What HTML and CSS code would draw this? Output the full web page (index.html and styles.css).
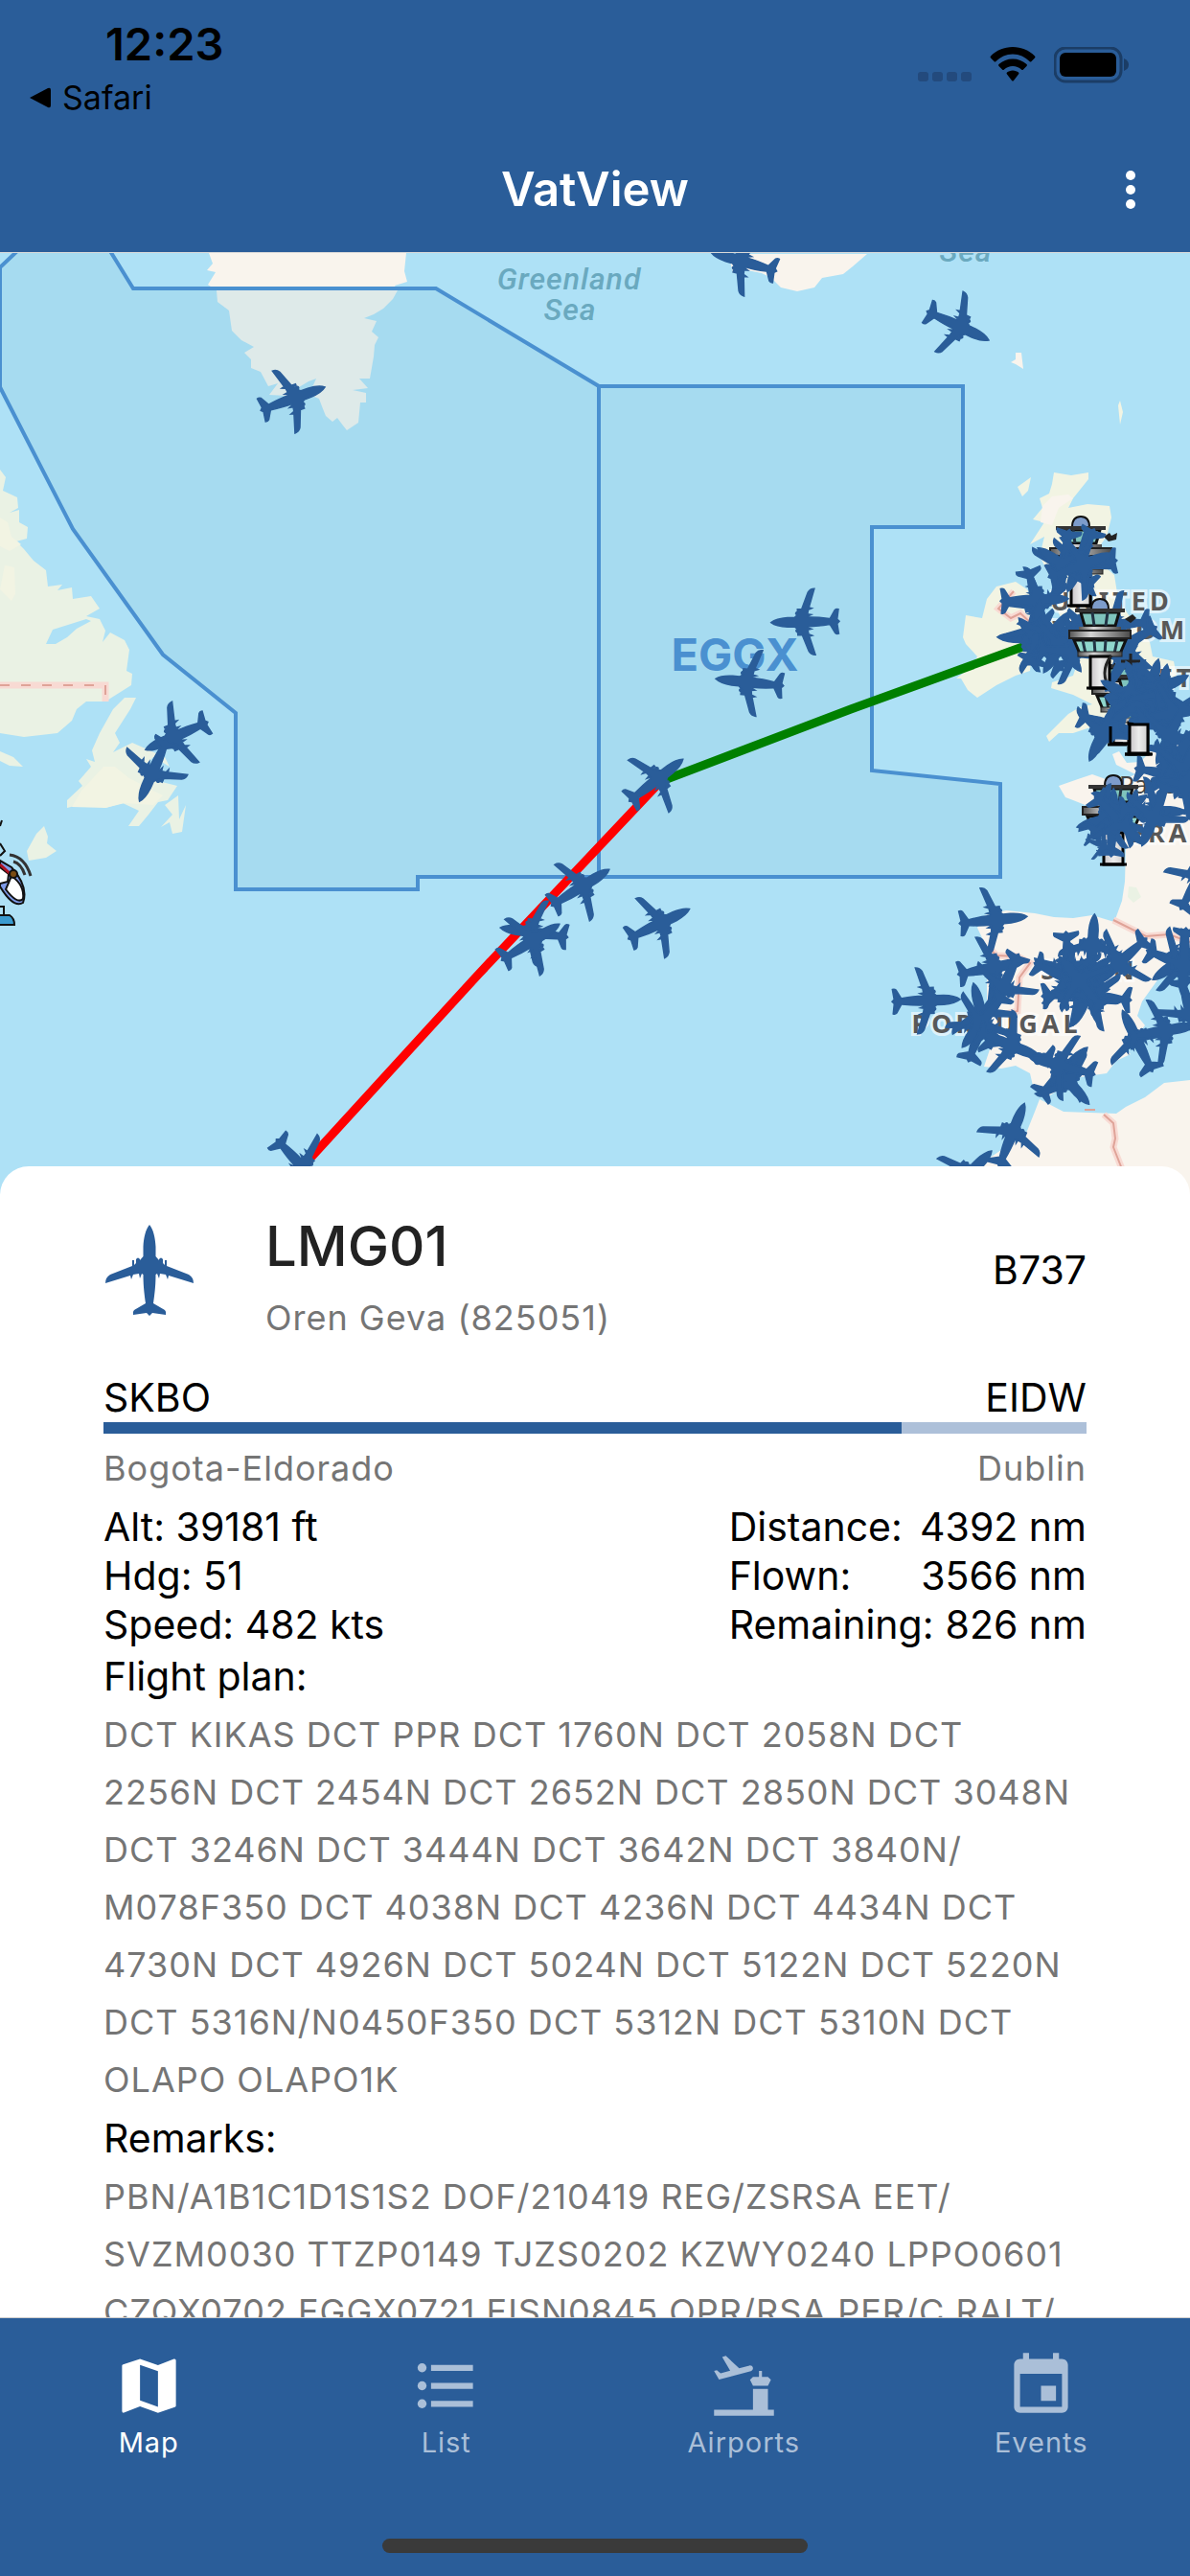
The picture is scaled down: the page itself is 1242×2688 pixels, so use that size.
FILE: index.html
```
<!DOCTYPE html>
<html lang="en">
<head>
    <meta charset="UTF-8">
    <meta name="viewport" content="width=device-width, initial-scale=1.0">
    <title>VatView</title>
    <link rel="stylesheet" href="styles.css">
</head>
<body>
    <header class="app-header">
        <div class="status-bar">
            <div class="status-left">
                <span class="clock">12:23</span>
                <a class="back-link" href="#">
                    <svg width="22" height="22" viewBox="0 0 22 22"><path d="M0 11 19 1q3-1 3 2v16q0 3-3 2z"/></svg>
                    Safari
                </a>
            </div>
            <div class="status-right">
                <svg class="signal" width="56" height="36" viewBox="0 0 56 36">
                    <rect x="0" y="26" width="11" height="10" rx="3"/>
                    <rect x="15" y="26" width="11" height="10" rx="3"/>
                    <rect x="30" y="26" width="11" height="10" rx="3"/>
                    <rect x="45" y="26" width="11" height="10" rx="3"/>
                </svg>
                <svg width="48" height="36" viewBox="0 0 48 36">
                    <path d="M24 0C15 0 7 3.500 1 9.500q-1 1 0 2l3.500 3.500q1 1 2 0C11 10.500 17 7.500 24 7.500s13 3 17.500 7.500q1 1 2 0l3.500-3.500q1-1 0-2C41 3.500 33 0 24 0z"/>
                    <path d="M24 12.500c-5.500 0-10.500 2-14.500 5.500q-1 1 0 2l3.500 3.500q1 1 2 0c2.500-2 5.500-3.500 9-3.500s6.500 1.500 9 3.500q1 1 2 0l3.500-3.500q1-1 0-2c-4-3.500-9-5.500-14.500-5.500z"/>
                    <path d="M24 24.500c-2.500 0-4.500 1-6 2q-1 1 0 2l5 6.500q1 1 2 0l5-6.500q1-1 0-2c-1.500-1-3.500-2-6-2z"/>
                </svg>
                <svg width="78" height="38" viewBox="0 0 78 38">
                    <rect class="battery-case" x="1" y="1" width="69" height="35" rx="11"/>
                    <rect x="6" y="6" width="59" height="25" rx="6"/>
                    <path class="battery-tip" d="M73 12q5 2 5 6.500t-5 6.500z"/>
                </svg>
            </div>
        </div>
        <div class="title-bar">
            <h1 class="title">VatView</h1>
            <button class="menu-button" type="button" aria-label="Menu">
                <svg width="12" height="44" viewBox="0 0 12 44"><circle cx="6" cy="7" r="5"/><circle cx="6" cy="22" r="5"/><circle cx="6" cy="37" r="5"/></svg>
            </button>
        </div>
    </header>

    <main class="content">
        <svg class="map" viewBox="0 264 1242 984" preserveAspectRatio="xMidYMin slice">
            <defs>
                <!-- aircraft, nose up, centred on 0,0 -->
                <path id="plane" d="M0-47C4-42 6-34 6.500-24V-14L10-10V-11Q12-14 14-11V-7L16-5V-10L18-10V-4L41 5Q46 8 46 14L20 6 19 10 17 5 11 4 10 9 8 4 6.500 5C6.500 18 5 28 4 35L16 42Q18 44 17 47L3 45 0 48-3 45-17 47Q-18 44-16 42L-4 35C-5 28-6.500 18-6.500 5L-8 4-10 9-11 4-17 5-19 10-20 6-46 14Q-46 8-41 5L-18-4V-10L-16-10V-5L-14-7V-11Q-12-14-10-11V-10L-6.500-14V-24C-6-34-4-42 0-47Z"/>
                <!-- map marker size -->
                <g id="p" class="plane"><use href="#plane" transform="scale(.75)"/></g>
                <linearGradient id="metal">
                    <stop offset="0" stop-color="#555"/>
                    <stop offset=".35" stop-color="#d5d5d5"/>
                    <stop offset="1" stop-color="#4a4a4a"/>
                </linearGradient>
                <linearGradient id="shaft">
                    <stop offset="0" stop-color="#c8c4c8"/>
                    <stop offset=".5" stop-color="#ececec"/>
                    <stop offset="1" stop-color="#cfcfcf"/>
                </linearGradient>
                <!-- control tower, centred on x=0, top at y=0 -->
                <g id="tower">
                    <path d="M-9 12Q-9 1 0 1T9 12Z" fill="#7d9ccb" stroke="#111" stroke-width="2"/>
                    <path d="M-20 15H20L16 29H-16Z" fill="#7fc4bd" stroke="#111" stroke-width="3"/>
                    <path d="M-8 15-6 29M8 15 6 29" stroke="#234" stroke-width="3"/>
                    <path d="M-26 11H26V15H-26Z" fill="#333"/>
                    <path d="M-27 44H27L21 58H-21Z" fill="#8fd6cd" stroke="#111" stroke-width="3"/>
                    <path d="M-18 44-15 58M-6 44-5 58M6 44 5 58M18 44 15 58" stroke="#234" stroke-width="3"/>
                    <rect x="-22" y="30" width="44" height="6" fill="url(#metal)"/>
                    <rect x="-32" y="34" width="64" height="8" fill="url(#metal)" stroke="#222" stroke-width="2"/>
                    <rect x="-23" y="56" width="46" height="5" fill="url(#metal)" stroke="#222"/>
                    <rect x="-10" y="61" width="20" height="33" fill="url(#shaft)" stroke="#000" stroke-width="3"/>
                    <path d="M-14 94H14" stroke="#000" stroke-width="3"/>
                </g>
            </defs>

            <!-- land -->
            <path class="land" d="M218 264 222 275 216 282 225 284 217 297 226 303 227 315 239 324 242 345 252 355 265 362 255 368 262 375 262 384 272 388 280 403 290 400 281 412 300 413 312 404 322 398 330 395 326 404 318 410 333 416 336 424 340 434 347 440 352 436 358 444 362 449 374 441 376 420 382 420 382 410 368 407 384 405 375 395 386 395 390 372 391 360 395 352 388 346 393 335 380 332 390 328 400 322 410 312 415 303 412 298 425 294 422 283 424 264ZM765 285 775 281 795 285 805 290 815 300 832 304 850 300 858 290 880 286 890 278 905 265H760ZM1055 378 1060 375 1060 368 1066 368 1068 385 1060 380Z"/>
            <path class="forest" d="M0 490 6 498 3 512 18 519 19 530 10 535 20 532 20 545 29 550 28 562 17 565 25 573 35 585 48 595 50 612 65 610 60 616 75 613 76 625 95 622 104 635 90 643 104 646 110 658 107 670 115 660 130 668 135 678 132 700 138 703 137 715 110 732H90L80 740 75 752 60 765 25 769 0 765ZM0 784 14 790 24 800 10 799 0 794ZM118 740 104 765 96 783 99 795 90 792 95 800 82 815 86 820 70 835 70 843 90 838 110 843 128 838 145 846 134 862 145 862 155 850 165 837 175 835 185 820 165 815 150 800 160 790 177 800 172 790 138 775 118 785 125 775 120 765 136 740 142 728 130 728ZM172 840 180 850 168 863 177 858 180 870 190 868 194 840 187 855 186 830ZM46 862 50 873 49 880 59 888 48 895 30 898 28 888 38 870Z"/>
            <path class="field" d="M0 540 8 545 12 560 22 568 10 575 0 570ZM5 590 15 592 16 620 12 627 0 615ZM108 800 120 800 135 812 160 825 170 830 160 840 130 838 110 843 75 842 85 825Z"/>
            <path class="water" d="M48 672 55 657 90 646 95 648 80 656 70 665 58 672Z"/>
            <path class="field" d="M1100 493 1118 496 1136 493 1136 500 1120 520 1115 530 1135 526 1158 528 1160 540 1155 560 1140 580 1163 600 1167 625 1180 645 1200 670 1203 685 1225 690 1228 705 1215 730 1225 735 1180 745 1150 755 1120 765 1105 765 1095 774 1092 768 1115 745 1127 738 1140 735 1120 725 1097 718 1098 712 1120 705 1125 690 1118 665 1105 640 1100 610 1085 580 1090 560 1075 568 1090 545 1078 542 1088 530 1085 520 1095 515 1098 505ZM1062 508 1076 498 1073 512 1067 518ZM1030 625 1040 612 1060 607 1072 615 1085 640 1078 665 1075 700 1060 705 1040 715 1020 728 1010 720 1003 708 998 708 1015 695 1020 685 1008 672 1005 665 1008 642 1025 645ZM1167 423 1169 418 1172 430 1169 443Z"/>
            <path class="land" d="M1098 518 1115 516 1120 520 1105 530 1098 548 1086 545 1088 528Z"/>
            <path class="land" d="M1242 770 1205 780 1190 795 1176 796 1168 784 1161 787 1165 798 1185 808 1165 817 1140 808 1125 813 1105 820 1112 832 1120 835 1140 843 1165 860 1175 885 1174 920 1171 940 1163 962 1140 955 1120 958 1100 957 1080 953 1050 950 1028 955 1020 968 1028 985 1030 1010 1030 1050 1033 1095 1027 1113 1045 1115 1060 1112 1075 1120 1078 1133 1090 1147 1105 1137 1120 1125 1155 1120 1165 1107 1180 1100 1175 1095 1195 1070 1187 1060 1192 1045 1210 1020 1242 1005ZM1242 1127 1215 1130 1195 1145 1175 1155 1165 1162 1110 1160 1085 1147 1080 1160 1070 1185 1045 1200 1030 1210 1000 1225V1248H1242Z"/>
            <path class="forest" d="M1178 925 1186 926 1191 936 1183 942 1177 936Z"/>

            <!-- country borders -->
            <path class="border-glow" d="M0 715H110V732M1162 960 1182 970 1196 977 1220 975 1242 983M1033 990 1040 997 1062 998 1075 1005 1064 1020 1062 1055 1050 1058M1152 1163 1162 1172 1164 1188 1162 1197 1175 1230M1058 617 1042 635 1055 645 1065 640 1078 652"/>
            <path class="border" stroke-dasharray="10 12" d="M0 715H110V732"/>
            <path class="border" d="M1162 960 1182 970 1196 977 1220 975 1242 983M1033 990 1040 997 1062 998 1075 1005 1064 1020 1062 1055 1050 1058M1152 1163 1162 1172 1164 1188 1162 1197 1175 1230M1058 617 1042 635 1055 645 1065 640 1078 652M1132 1158H1143"/>

            <!-- place names -->
            <text class="sea" x="594" y="302">Greenland</text>
            <text class="sea" x="595" y="334">Sea</text>
            <text class="sea" x="1008" y="273">Sea</text>
            <text class="country" x="1160" y="637">UNITED</text>
            <text class="country" x="1158" y="667">KINGDOM</text>
            <text class="country" x="1228" y="717">ET</text>
            <text class="country" x="1244" y="879">FRANCE</text>
            <text class="country" x="1137" y="1022">SPAIN</text>
            <text class="country" x="1040" y="1078">PORTUGAL</text>
            <text class="city" x="1198" y="828">Paris</text>

            <!-- oceanic control areas -->
            <path class="fir" d="M0 279 18 262H115L139 301H455L625 403V915H436V928H246V744L170 683 76 552 0 404Z"/>
            <path class="fir" d="M625 403H1005V550H910V804L1044 818V915H625Z"/>
            <text class="fir-name" x="767" y="700">EGGX</text>

            <!-- flown and remaining track -->
            <path class="flown" d="M688 817 500 1016 318 1215"/>
            <path class="remaining" d="M688 816 888 740 1070 674"/>

            <!-- radar dish -->
            <g stroke="#111" stroke-width="2">
                <path d="M0 955H10Q15 958 15 965H0" fill="#3a9bd0"/>
                <path d="M0 925Q14 948 24 942 30 925 12 905L0 898Z" fill="#7f9be8"/>
                <path d="M6 928Q18 944 24 938 26 924 12 914Z" fill="#fff"/>
                <path d="M0 905 9 912 8 920 0 922" fill="#fff"/>
                <path d="M0 902 13 914" stroke="#b01020" stroke-width="3"/>
                <circle cx="14" cy="912" r="4" fill="#7a4b12"/>
                <path d="M10 892Q26 894 32 914M14 899Q22 901 26 913" fill="none" stroke="#333" stroke-width="3"/>
                <path d="M0 880 5 888 0 893M0 862 2 856M0 946H4V955" fill="none"/>
            </g>

            <use href="#tower" x="1128" y="538"/>
            <use href="#tower" x="1172" y="682"/>
            <use href="#tower" x="1188" y="693"/>
            <use href="#tower" x="1162" y="808"/>
            <path d="M1152 560 1158 556 1160 559 1166 556 1165 563 1157 565Z" fill="#222"/>

            <!-- traffic: ocean -->
            <use href="#p" transform="translate(306 416) rotate(70)"/>
            <use href="#p" transform="translate(776 273) rotate(286)"/>
            <use href="#p" transform="translate(1000 340) rotate(115)"/>
            <use href="#p" transform="translate(840 649) rotate(269)"/>
            <use href="#p" transform="translate(782 712) rotate(276)"/>
            <use href="#p" transform="translate(184 768) rotate(246)"/>
            <use href="#p" transform="translate(160 804) rotate(204)"/>
            <use href="#p" transform="translate(685 814) rotate(52)"/>
            <use href="#p" transform="translate(606 926) rotate(58)"/>
            <use href="#p" transform="translate(688 964) rotate(64)"/>
            <use href="#p" transform="translate(557 973) rotate(278)"/>
            <use href="#p" transform="translate(554 983) rotate(58)"/>
            <use href="#p" transform="translate(313 1215) rotate(137)"/>

            <!-- traffic: Scotland and Ireland -->
            <use href="#p" transform="translate(1128 585) rotate(203)"/>
            <use href="#p" transform="translate(1110 588) rotate(190)"/>
            <use href="#p" transform="translate(1130 588) rotate(265)"/>
            <use href="#p" transform="translate(1112 592) rotate(305)"/>
            <use href="#p" transform="translate(1128 590) rotate(70)"/>
            <use href="#p" transform="translate(1082 628) rotate(165)"/>
            <use href="#p" transform="translate(1080 626) rotate(88)"/>
            <use href="#p" transform="translate(1076 666) rotate(272)"/>
            <use href="#p" transform="translate(1082 660) rotate(5)"/>
            <use href="#p" transform="translate(1086 672) rotate(320)"/>
            <use href="#p" transform="translate(1095 665) rotate(40)"/>
            <use href="#p" transform="translate(1108 672) rotate(145)"/>
            <use href="#p" transform="translate(1108 672) rotate(212)"/>
            <use href="#p" transform="translate(1118 680) rotate(95)"/>
            <use href="#p" transform="translate(1165 652) rotate(265)"/>
            <use href="#p" transform="translate(1176 672) rotate(240)"/>
            <use href="#p" transform="translate(1172 690) rotate(30)"/>
            <use href="#tower" x="1148" y="624"/>
            <path d="M1174 646 1182 641 1186 645 1180 650Z" fill="#222"/>
            <path d="M1160 684Q1146 702 1160 722M1170 690H1190M1180 682V698" fill="none" stroke="#222" stroke-width="3"/>

            <!-- traffic: England and the Channel -->
            <use href="#p" transform="translate(1160 757) rotate(108)"/>
            <use href="#p" transform="translate(1152 762) rotate(205)"/>
            <use href="#p" transform="translate(1188 724) rotate(265)"/>
            <use href="#p" transform="translate(1180 728) rotate(300)"/>
            <use href="#p" transform="translate(1190 722) rotate(335)"/>
            <use href="#p" transform="translate(1200 722) rotate(15)"/>
            <use href="#p" transform="translate(1208 720) rotate(65)"/>
            <use href="#p" transform="translate(1190 735) rotate(240)"/>
            <use href="#p" transform="translate(1205 735) rotate(120)"/>
            <use href="#p" transform="translate(1212 728) rotate(10)"/>
            <use href="#p" transform="translate(1215 745) rotate(165)"/>
            <use href="#p" transform="translate(1222 745) rotate(80)"/>
            <use href="#p" transform="translate(1222 765) rotate(205)"/>
            <use href="#p" transform="translate(1220 808) rotate(100)"/>
            <use href="#p" transform="translate(1222 805) rotate(230)"/>
            <use href="#p" transform="translate(1230 790) rotate(30)"/>
            <use href="#p" transform="translate(1236 812) rotate(340)"/>
            <use href="#p" transform="translate(1238 800) rotate(200)"/>
            <use href="#p" transform="translate(1240 820) rotate(280)"/>
            <path d="M1159 758V776H1172M1156 777H1176" fill="none" stroke="#000" stroke-width="3"/>
            <rect x="1179" y="756" width="19" height="30" fill="url(#shaft)" stroke="#000" stroke-width="3"/>
            <path d="M1174 787H1203" stroke="#000" stroke-width="3"/>

            <!-- traffic: France -->
            <use href="#p" transform="translate(1161 858) rotate(2)"/>
            <use href="#p" transform="translate(1158 854) rotate(255)"/>
            <use href="#p" transform="translate(1168 850) rotate(55)"/>
            <use href="#p" transform="translate(1168 856) rotate(135)"/>
            <use href="#p" transform="translate(1150 882) rotate(110) scale(.5)"/>
            <use href="#p" transform="translate(1203 846) rotate(92)"/>
            <use href="#p" transform="translate(1205 850) rotate(202)"/>
            <use href="#p" transform="translate(1250 918) rotate(30)"/>

            <!-- traffic: Iberia -->
            <use href="#p" transform="translate(1037 960) rotate(84)"/>
            <use href="#p" transform="translate(1035 1010) rotate(79)"/>
            <use href="#p" transform="translate(967 1044) rotate(88)"/>
            <use href="#p" transform="translate(1023 1074) rotate(20)"/>
            <use href="#p" transform="translate(1048 1028) rotate(205)"/>
            <use href="#p" transform="translate(1025 1060) rotate(345)"/>
            <use href="#p" transform="translate(1026 1065) rotate(218)"/>
            <use href="#p" transform="translate(1053 1090) rotate(112)"/>
            <use href="#p" transform="translate(1110 1118) rotate(45)"/>
            <use href="#p" transform="translate(1113 1126) rotate(138)"/>
            <use href="#p" transform="translate(1108 1112) rotate(285)"/>
            <use href="#p" transform="translate(1056 1184) rotate(22)"/>
            <use href="#p" transform="translate(1010 1226) rotate(45)"/>
            <use href="#p" transform="translate(1140 989) rotate(4)"/>
            <use href="#p" transform="translate(1115 1008) rotate(176)"/>
            <use href="#p" transform="translate(1170 1003) rotate(228)"/>
            <use href="#p" transform="translate(1112 1020) rotate(115)"/>
            <use href="#p" transform="translate(1123 1036) rotate(84)"/>
            <use href="#p" transform="translate(1145 1040) rotate(276)"/>
            <use href="#p" transform="translate(1135 1038) rotate(205)"/>
            <use href="#p" transform="translate(1138 1035) rotate(165)"/>
            <use href="#p" transform="translate(1132 1022) rotate(50)"/>
            <use href="#p" transform="translate(1128 1025) rotate(320)"/>
            <use href="#p" transform="translate(1187 1086) rotate(334)"/>
            <use href="#p" transform="translate(1213 1076) rotate(80)"/>
            <use href="#p" transform="translate(1242 1055) rotate(165)"/>
            <use href="#p" transform="translate(1230 1005) rotate(112)"/>
            <use href="#p" transform="translate(1232 1002) rotate(235)"/>
            <use href="#p" transform="translate(1236 1004) rotate(183)"/>
        </svg>

        <section class="sheet">
            <div class="flight-head">
                <svg class="flight-icon" width="96" height="96" viewBox="-48 -48 96 96"><use href="#plane"/></svg>
                <div class="flight-names">
                    <h2 class="callsign">LMG01</h2>
                    <p class="caption">Oren Geva (825051)</p>
                </div>
                <span class="aircraft">B737</span>
            </div>

            <div class="row">
                <span>SKBO</span>
                <span>EIDW</span>
            </div>
            <div class="progress"><div class="progress-done" style="width: 81.2%"></div></div>
            <div class="row airports">
                <span class="caption">Bogota-Eldorado</span>
                <span class="caption">Dublin</span>
            </div>

            <div class="row">
                <div>
                    <p>Alt: 39181 ft</p>
                    <p>Hdg: 51</p>
                    <p>Speed: 482 kts</p>
                </div>
                <dl class="distances">
                    <div class="row"><dt>Distance:</dt><dd>4392 nm</dd></div>
                    <div class="row"><dt>Flown:</dt><dd>3566 nm</dd></div>
                    <div class="row"><dt>Remaining:</dt><dd>826 nm</dd></div>
                </dl>
            </div>

            <h3 class="label">Flight plan:</h3>
            <p class="caption plan-text">DCT KIKAS DCT PPR DCT 1760N DCT 2058N DCT 2256N DCT 2454N DCT 2652N DCT 2850N DCT 3048N DCT 3246N DCT 3444N DCT 3642N DCT 3840N/<wbr>M078F350 DCT 4038N DCT 4236N DCT 4434N DCT 4730N DCT 4926N DCT 5024N DCT 5122N DCT 5220N DCT 5316N/N0450F350 DCT 5312N DCT 5310N DCT OLAPO OLAPO1K</p>
            <h3 class="label">Remarks:</h3>
            <p class="caption plan-text">PBN/A1B1C1D1S1S2 DOF/210419 REG/ZSRSA EET/<wbr>SVZM0030 TTZP0149 TJZS0202 KZWY0240 LPPO0601 CZQX0702 EGGX0721 EISN0845 OPR/RSA PER/C RALT/</p>
        </section>
    </main>

    <nav class="tabs">
        <div class="tab-row">
            <a class="tab active" href="#">
                <svg width="75" height="75" viewBox="0 0 24 24"><path d="M15 19 9 16.890V5L15 7.110M20.500 3C20.440 3 20.390 3 20.340 3L15 5.100 9 3 3.360 4.900C3.150 4.970 3 5.150 3 5.380V20.500A.5.5 0 0 0 3.500 21C3.550 21 3.610 21 3.660 20.970L9 18.900 15 21 20.640 19.100C20.850 19 21 18.850 21 18.620V3.500A.5.5 0 0 0 20.500 3Z"/></svg>
                Map
            </a>
            <a class="tab" href="#">
                <svg width="75" height="75" viewBox="0 0 24 24"><path d="M7 5H21V7H7ZM7 11H21V13H7ZM7 17H21V19H7Z"/><circle cx="4" cy="6" r="1.500"/><circle cx="4" cy="12" r="1.500"/><circle cx="4" cy="18" r="1.500"/></svg>
                List
            </a>
            <a class="tab" href="#">
                <svg width="75" height="75" viewBox="0 0 24 24"><path d="M14.970 5.920C14.830 5.410 14.300 5.100 13.790 5.240L10.390 6.150 5.950 2.030 4.720 2.360 7.380 6.950 4.190 7.800 2.930 6.820 2 7.070 3.660 9.950 14.280 7.110C14.800 6.960 15.100 6.430 14.970 5.920M21 10 20 12H15L14 10 15 9H17V7H18V9H20L21 10M22 20V22H2V20H15V13H20V20H22Z"/></svg>
                Airports
            </a>
            <a class="tab" href="#">
                <svg width="75" height="75" viewBox="0 0 24 24"><path d="M17 12h-5v5h5zM16 1v2H8V1H6v2H5C3.900 3 3 3.900 3 5v14c0 1.100.9 2 2 2h14c1.100 0 2-.9 2-2V5c0-1.100-.9-2-2-2h-1V1zM19 19H5V8h14z"/></svg>
                Events
            </a>
        </div>
        <div class="home-indicator"></div>
    </nav>
</body>
</html>
```
FILE: styles.css
```
* {
    box-sizing: border-box;
}

body {
    margin: 0;
    height: 100vh;
    display: flex;
    flex-direction: column;
    background-color: #fff;
    color: #000;
    font-family: Inter, "Liberation Sans", sans-serif;
    font-size: 41px;
    line-height: 51px;
}

h1, h2, h3, p, dl, dd {
    margin: 0;
    font-weight: 400;
}

a {
    color: inherit;
    text-decoration: none;
}

/* header */
.app-header {
    background-color: #2a5d99;
    border-bottom: 1px solid #d8d8d8;
}

.status-bar {
    display: flex;
    justify-content: space-between;
    height: 132px;
    padding: 20px 64px 0 31px;
}

.status-left {
    display: flex;
    flex-direction: column;
    gap: 6px;
}

.clock {
    padding-left: 79px;
    font-size: 47px;
    font-weight: 600;
    line-height: 52px;
}

.back-link {
    display: flex;
    align-items: center;
    gap: 12px;
    font-size: 34px;
    line-height: 48px;
}

.status-right {
    display: flex;
    align-items: flex-start;
    gap: 19px;
    padding-top: 29px;
}

.signal {
    fill: #234a7d;
}

.battery-case {
    fill: none;
    stroke: #1b3d66;
    stroke-width: 3;
}

.battery-tip {
    fill: #1b3d66;
}

.title-bar {
    display: grid;
    grid-template-columns: 60px 1fr 60px;
    align-items: center;
    height: 131px;
    padding: 0 32px;
    color: #fff;
}

.title {
    grid-column: 2;
    font-size: 49px;
    font-weight: 600;
    text-align: center;
}

.menu-button {
    display: flex;
    justify-content: center;
    padding: 12px;
    border: none;
    background: none;
    cursor: pointer;
}

.menu-button svg {
    fill: #fff;
}

/* map */
.content {
    flex: 1;
    display: grid;
    grid-template-rows: 953fr 1201fr;
    min-height: 0;
    overflow: hidden;
}

.map {
    grid-area: 1 / 1 / 2 / 2;
    display: block;
    width: 100%;
    height: calc(100% + 31px);
    background-color: #aee1f6;
}

.land {
    fill: #f9f4ed;
}

.forest {
    fill: #eaf2e4;
}

.field {
    fill: #f2f4e3;
}

.water {
    fill: #aee1f6;
}

.border-glow {
    fill: none;
    stroke: #f8dad3;
    stroke-width: 7;
}

.border {
    fill: none;
    stroke: #dfa398;
    stroke-width: 2;
}

.sea,
.country,
.city,
.fir-name {
    text-anchor: middle;
}

.sea {
    fill: #6aa9bf;
    font-family: Roboto, sans-serif;
    font-size: 32px;
    font-style: italic;
    font-weight: 500;
    letter-spacing: 1px;
}

.country {
    fill: #585858;
    stroke: rgba(255, 255, 255, 0.6);
    stroke-width: 6;
    paint-order: stroke;
    font-family: "Noto Sans", sans-serif;
    font-size: 27px;
    font-weight: 700;
    letter-spacing: 4px;
}

.city {
    fill: #444;
    font-family: "Noto Sans", sans-serif;
    font-size: 26px;
}

.fir {
    fill: rgba(145, 204, 225, 0.25);
    stroke: #4a90d0;
    stroke-width: 4;
}

.fir-name {
    fill: #4a90d0;
    font-size: 47px;
    font-weight: 700;
}

.flown,
.remaining {
    fill: none;
    stroke-width: 9;
}

.flown {
    stroke: #f00;
}

.remaining {
    stroke: #008000;
}

.plane,
.flight-icon {
    fill: #2a5d99;
}

.plane {
    stroke: #2a5d99;
    stroke-width: 2;
}

/* flight details */
.sheet {
    grid-area: 2 / 1 / 3 / 2;
    z-index: 1;
    min-height: 0;
    overflow: hidden;
    padding: 28px 108px 0;
    border-radius: 30px 30px 0 0;
    background-color: #fff;
}

.flight-head {
    display: flex;
    align-items: center;
    margin-bottom: 28px;
}

.flight-names {
    flex: 1;
    padding: 10px 0 0 73px;
}

.callsign {
    color: #222;
    font-size: 58px;
    font-weight: 500;
    line-height: 90px;
}

.caption {
    color: #757575;
    font-size: 36px;
    letter-spacing: 1px;
    line-height: 60px;
}

.row {
    display: flex;
    justify-content: space-between;
}

.progress {
    height: 12px;
    background-color: #adc0d9;
}

.progress-done {
    height: 100%;
    background-color: #2a5d99;
}

.airports {
    margin: 6px 0;
}

.distances .row {
    gap: 12px;
}

.label {
    padding: 3px 0 5px;
    font-size: 41px;
}

.plan-text {
    margin-bottom: 3px;
    padding-right: 12px;
}

/* bottom tabs */
.tabs {
    display: flex;
    flex-direction: column;
    justify-content: space-between;
    align-items: center;
    height: 270px;
    padding: 33px 0 24px;
    border-top: 1px solid #ccc;
    background-color: #2a5d99;
}

.tab-row {
    display: flex;
    width: 100%;
}

.tab {
    flex: 1;
    display: flex;
    flex-direction: column;
    align-items: center;
    gap: 4px;
    color: #aabfd8;
    fill: #aabfd8;
    font-size: 29px;
    letter-spacing: 1px;
    line-height: 36px;
}

.tab.active {
    color: #fff;
    fill: #fff;
}

.home-indicator {
    width: 444px;
    height: 15px;
    border-radius: 8px;
    background-color: #3a3a3a;
}
```
